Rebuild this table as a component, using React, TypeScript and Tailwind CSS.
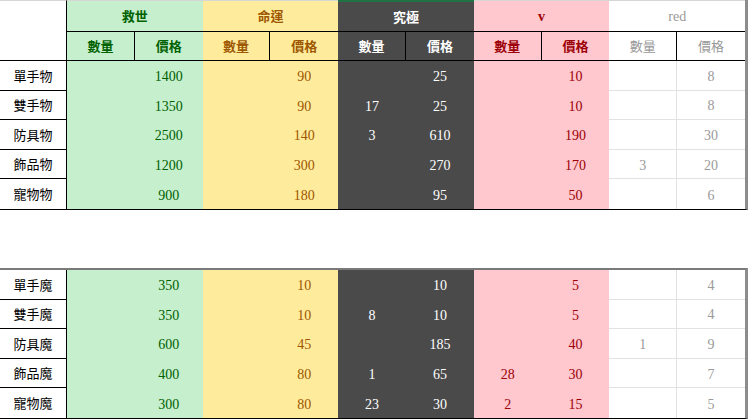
import React from "react";

type Group = { name: string; bg: string; text: string; hdr: string; line: boolean };

const groups: Group[] = [
  { name: "救世", bg: "bg-[#c6efce]", text: "text-[#006100]", hdr: "font-bold cjk", line: false },
  { name: "命運", bg: "bg-[#ffeb9c]", text: "text-[#9c5700]", hdr: "font-bold cjk", line: false },
  { name: "究極", bg: "bg-[#4a4a4a]", text: "text-white", hdr: "font-bold cjk", line: false },
  { name: "v", bg: "bg-[#ffc7ce]", text: "text-[#9c0006]", hdr: "font-bold serif", line: false },
  { name: "red", bg: "bg-white", text: "text-[#9a9a9a]", hdr: "serif", line: true },
];

type Row = { label: string; vals: [string, string][] };

const top: Row[] = [
  { label: "單手物", vals: [["", "1400"], ["", "90"], ["", "25"], ["", "10"], ["", "8"]] },
  { label: "雙手物", vals: [["", "1350"], ["", "90"], ["17", "25"], ["", "10"], ["", "8"]] },
  { label: "防具物", vals: [["", "2500"], ["", "140"], ["3", "610"], ["", "190"], ["", "30"]] },
  { label: "飾品物", vals: [["", "1200"], ["", "300"], ["", "270"], ["", "170"], ["3", "20"]] },
  { label: "寵物物", vals: [["", "900"], ["", "180"], ["", "95"], ["", "50"], ["", "6"]] },
];

const bottom: Row[] = [
  { label: "單手魔", vals: [["", "350"], ["", "10"], ["", "10"], ["", "5"], ["", "4"]] },
  { label: "雙手魔", vals: [["", "350"], ["", "10"], ["8", "10"], ["", "5"], ["", "4"]] },
  { label: "防具魔", vals: [["", "600"], ["", "45"], ["", "185"], ["", "40"], ["1", "9"]] },
  { label: "飾品魔", vals: [["", "400"], ["", "80"], ["1", "65"], ["28", "30"], ["", "7"]] },
  { label: "寵物魔", vals: [["", "300"], ["", "80"], ["23", "30"], ["2", "15"], ["", "5"]] },
];

const CJK = "font-['Noto_Sans_CJK_TC','Noto_Sans',sans-serif]";
const SERIF = "font-['Liberation_Serif','Noto_Sans_CJK_TC',serif]";

function DataRows({ rows }: { rows: Row[] }) {
  return (
    <>
      {rows.map((r, ri) => {
        const last = ri === rows.length - 1;
        return (
          <div key={r.label} className="grid grid-cols-[67px_repeat(10,minmax(0,1fr))] h-[29.6px]">
            <div
              className={`flex items-center justify-center bg-white border-r border-black text-[13px] text-black ${CJK} ${
                last ? "" : "border-b"
              }`}
            >
              {r.label}
            </div>
            {r.vals.map((v, gi) => {
              const g = groups[gi];
              const lineB = g.line && !last ? "border-b border-[#e2e2e2]" : "";
              return (
                <React.Fragment key={gi}>
                  <div
                    className={`flex items-center justify-center pt-[2px] text-[14px] ${SERIF} ${g.bg} ${g.text} ${lineB} ${
                      g.line ? "border-r border-r-[#e2e2e2]" : ""
                    }`}
                  >
                    {v[0]}
                  </div>
                  <div className={`flex items-center justify-center pt-[2px] text-[14px] ${SERIF} ${g.bg} ${g.text} ${lineB}`}>
                    {v[1]}
                  </div>
                </React.Fragment>
              );
            })}
          </div>
        );
      })}
    </>
  );
}

export default function App() {
  return (
    <div className="w-[750px] h-[419px] bg-white overflow-hidden">
      <div className="w-[748px] border-r-[3px] border-r-[#8c8c8c] border-b border-b-black">
        {/* header row 1 */}
        <div className="grid grid-cols-[67px_repeat(10,minmax(0,1fr))] h-[31px]">
          <div className="bg-white border-r border-black border-t border-t-[#d6d6d6]" />
          {groups.map((g, i) => (
            <div
              key={g.name}
              className={`col-span-2 flex items-center justify-center text-[13px] ${g.bg} ${g.text} ${
                g.hdr.includes("serif") ? SERIF : CJK
              } ${g.hdr.includes("font-bold") ? "font-bold" : ""} ${
                i === 2 ? "border-t-2 border-t-[#1f7244]" : "border-t border-t-[#d6d6d6]"
              } ${g.hdr.includes("serif") ? "text-[14px]" : ""}`}
            >
              {g.name}
            </div>
          ))}
        </div>
        {/* header row 2 */}
        <div className="grid grid-cols-[67px_repeat(10,minmax(0,1fr))] h-[30px]">
          <div className="bg-white border-r border-black border-b border-b-black" />
          {groups.map((g, i) => (
            <React.Fragment key={g.name}>
              <div
                className={`flex items-center justify-center text-[13px] ${CJK} ${g.bg} ${g.text} ${
                  i === 4 ? "" : "font-bold"
                } border-t border-b border-r border-black`}
              >
                數量
              </div>
              <div
                className={`flex items-center justify-center text-[13px] ${CJK} ${g.bg} ${g.text} ${
                  i === 4 ? "" : "font-bold"
                } border-t border-b border-black`}
              >
                價格
              </div>
            </React.Fragment>
          ))}
        </div>
        <DataRows rows={top} />
      </div>

      <div className="h-[58px]" />

      <div className="w-[748px] border-r-[3px] border-r-[#8c8c8c] border-t-2 border-t-[#7a7a7a] border-b border-b-black">
        <DataRows rows={bottom} />
      </div>
    </div>
  );
}
